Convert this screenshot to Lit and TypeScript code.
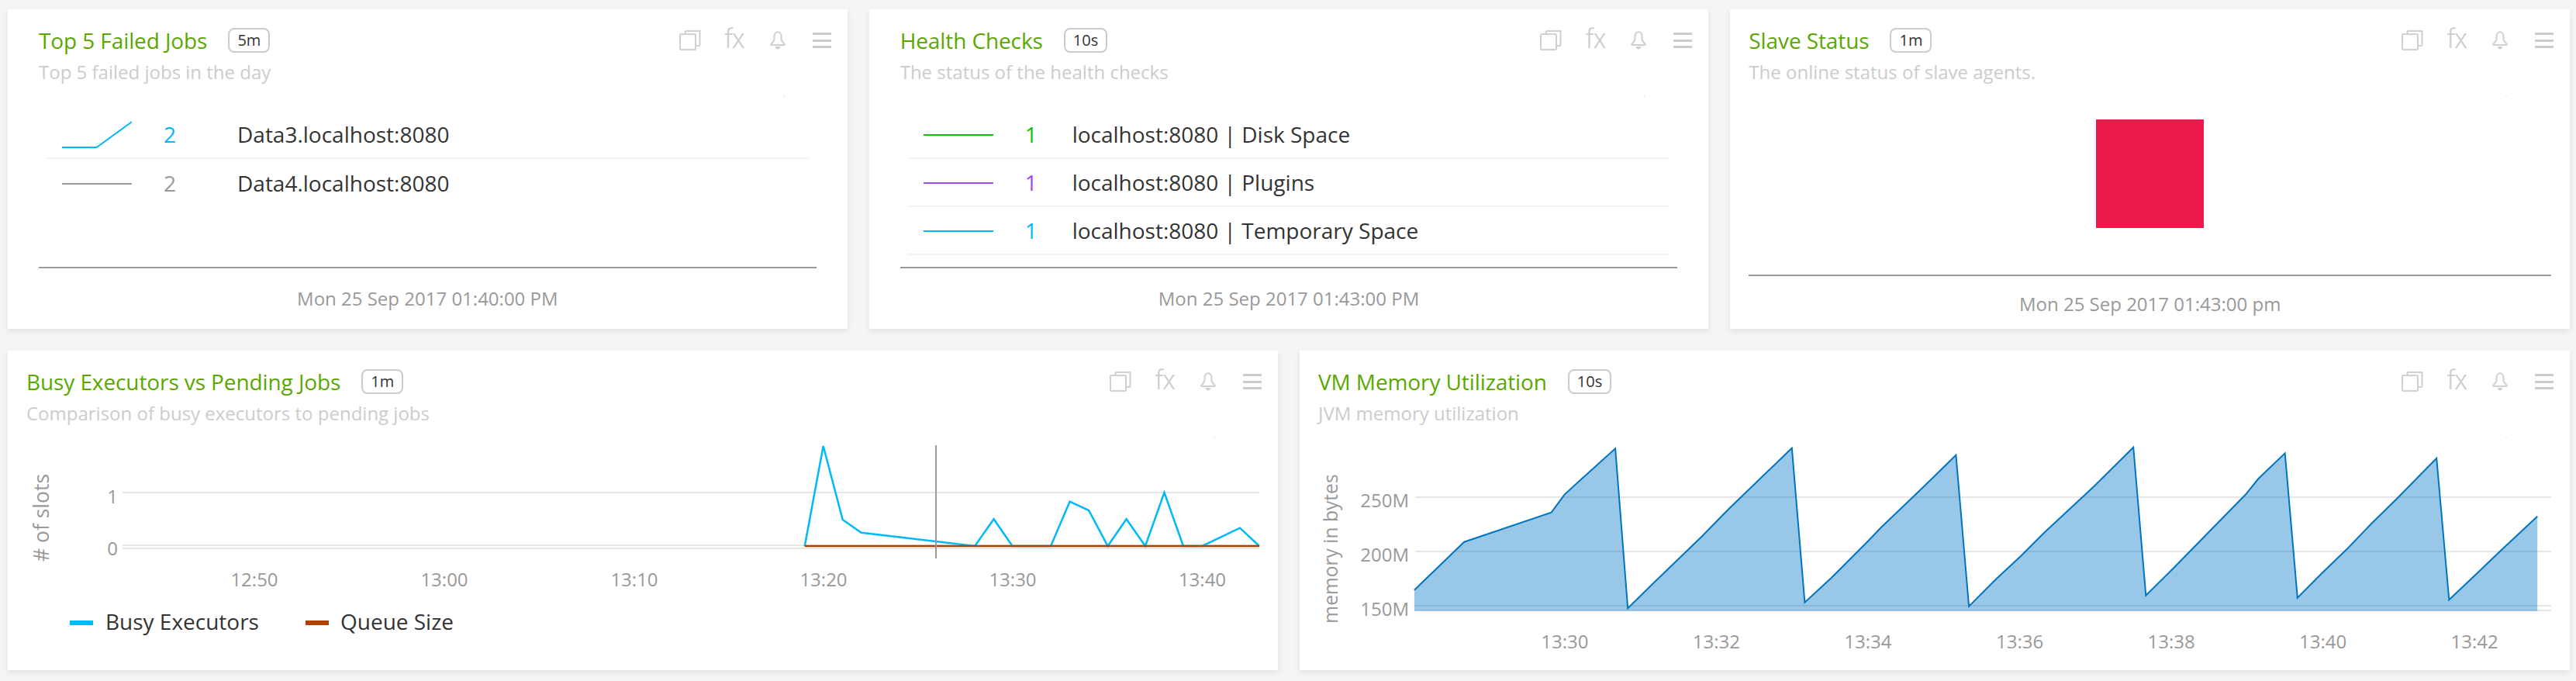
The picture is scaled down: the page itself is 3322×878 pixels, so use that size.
import { LitElement, html, css, svg } from "lit";
import { customElement, property } from "lit/decorators.js";

const BLUE = "#00b9fb";
const RED = "#ae4100";

const busy = [[270,792],[317,405],[366,690],[413,740],[700,792],[748,688],[795,792],[892,792],[940,620],[988,654],[1036,792],[1083,688],[1131,792],[1179,585],[1227,792],[1275,792],[1370,722],[1419,792]]
  .map(([x, y]) => [900 + x / 1.96, 440 + y / 3]);

const memA = [[306,962],[426,776],[636,662],[668,592],[790,415],[820,1033],[880,938],[1000,752],[1062,650],[1215,413],[1246,1010],[1310,915],[1400,770],[1430,720]]
  .map(([x, y]) => [1660 + x / 1.867, 440 + y / 3]);
const memB = [[0,565],[79,440],[110,1025],[175,920],[235,830],[290,742],[410,562],[505,410],[535,983],[600,880],[650,797],[775,592],[805,532],[869,433],[899,992],[960,893],[1020,800],[1075,708],[1140,605],[1233,452],[1263,1000],[1330,898],[1385,813],[1475,677]]
  .map(([x, y]) => [2480 + x / 1.862, 440 + y / 3]);
const mem = [...memA, ...memB];

const pts = (a: number[][]) => a.map((p) => `${p[0].toFixed(1)},${p[1].toFixed(1)}`).join(" ");

@customElement("dash-card")
class DashCard extends LitElement {
  @property() heading = "";
  @property() sub = "";
  @property() interval = "";
  @property() foot = "";
  @property({ type: Boolean, reflect: true }) wide = false;

  static styles = css`
    :host { display: flex; flex-direction: column; position: relative; background: #fff; height: 412px; box-shadow: 0 3px 8px rgba(0,0,0,.09); font-family: "Open Sans", sans-serif; }
    .head { padding: 24px 21px 0 24px; height: 76px; box-sizing: content-box; }
    :host([wide]) .head { padding-left: 40px; }
    .top { display: flex; align-items: center; height: 32px; }
    .title { font-size: 28px; line-height: 32px; color: #5aa700; white-space: nowrap; letter-spacing: -.1px; }
    .badge { margin-left: 27px; box-sizing: border-box; height: 32px; padding: 0 10px; border: 2px solid #ccc; border-radius: 8px; font-size: 20px; line-height: 28px; color: #333; }
    .tools { margin-left: auto; display: flex; align-items: center; height: 32px; }
    .tools svg { display: block; fill: none; stroke: #d0d0d0; stroke-width: 2; }
    .fx { margin-left: 30px; width: 23px; height: 28px; font-family: Roboto, sans-serif; font-weight: 300; font-size: 35px; line-height: 26px; color: #ccc; letter-spacing: -1.5px; }
    .bell { margin-left: 36px; }
    .menu { margin-left: 35px; display: flex; flex-direction: column; gap: 5.5px; width: 24px; }
    .menu i { display: block; height: 3px; background: #ccc; }
    .sub { margin-top: 9px; font-size: 24px; line-height: 32px; color: #ccc; white-space: nowrap; }
    .body { flex: 1; min-height: 0; }
    .foot { margin: 0 40px; border-top: 2px solid #999; padding: 25px 0; font-size: 24px; line-height: 28px; color: #999; text-align: center; }
    :host(:not([wide])) .foot { margin: 0 24px; padding: 22px 0 18px; }
    .speck { position: absolute; right: 81px; top: 112px; width: 2px; height: 1px; background: #ddd; }
  `;

  render() {
    return html`
      <div class="head">
        <div class="top">
          <span class="title">${this.heading}</span>
          <span class="badge">${this.interval}</span>
          <div class="tools">
            <svg width="28" height="26" viewBox="0 0 28 26"><rect x="1" y="5" width="20" height="20" rx="1.5"></rect><path d="M7.5 5V2.5Q7.5 1 9 1H26.5V18.5Q26.5 20 25 20H22"></path></svg>
            <span class="fx">fx</span>
            <svg class="bell" width="20" height="24" viewBox="0 0 20 24"><path d="M10 1.2C7 1.2 5.5 4 5.5 7V10C5.5 13 3.5 14.5 1.5 16.5Q.6 18 2 18H18Q19.400 18 18.500 16.500C16.500 14.500 14.500 13 14.500 10V7C14.500 4 13 1.200 10 1.200Z"></path><path d="M6.500 20H13.500C13 22.500 11.500 23.500 10 23.500S7 22.500 6.500 20Z" style="fill:#d0d0d0;stroke:none"></path></svg>
            <div class="menu"><i></i><i></i><i></i></div>
          </div>
        </div>
        <div class="sub">${this.sub}</div>
      </div>
      <div class="body"><slot></slot></div>
      ${this.foot ? html`<div class="foot">${this.foot}</div>` : ""}
      <span class="speck"></span>
    `;
  }
}

@customElement("app-root")
class AppRoot extends LitElement {
  static styles = css`
    :host { display: block; width: 3322px; height: 878px; overflow: hidden; background: #f5f5f5; font-family: "Open Sans", sans-serif; }
    .page { box-sizing: border-box; height: 878px; padding: 12px 8px 14px 10px; display: grid; grid-template-columns: repeat(6, 1fr); gap: 28px; align-content: start; }
    .third { grid-column: span 2; }
    .half { grid-column: span 3; }
    .list { margin: 31px 50px 0; }
    .row { display: flex; align-items: center; box-sizing: border-box; height: 62px; padding-left: 20px; border-bottom: 2px solid #f3f3f3; font-size: 28px; color: #333; white-space: nowrap; }
    .row.last { border-bottom: none; }
    .row svg { display: block; width: 90px; height: 60px; margin-right: 41px; fill: none; stroke-width: 2; }
    .num { flex: none; }
    .num.w { width: 95px; }
    .num.n { width: 61px; }
    .status { height: 100%; display: flex; justify-content: center; padding-top: 42px; box-sizing: border-box; }
    .block { width: 139px; height: 140px; background: #ec1a4b; }
    .chart { display: block; width: 100%; height: 312px; }
    .chart text { font-family: "Open Sans", sans-serif; font-size: 24px; fill: #999; }
    .chart text.legend { font-size: 28px; fill: #333; }
    .chart text.ax1 { font-size: 26.5px; }
    .chart text.ax2 { font-size: 24.6px; }
    .grid { stroke: #e6e6e6; stroke-width: 2; }
  `;

  private row(color: string, n: string, name: string, cls: string, line: string, last = false) {
    return html`<div class="row ${last ? "last" : ""}">
      <svg viewBox="0 0 90 60" style="stroke:${color}"><polyline points=${line}></polyline></svg>
      <span class="num ${cls}" style="color:${color}">${n}</span>
      <span>${name}</span>
    </div>`;
  }

  private busyChart() {
    return html`<svg class="chart" viewBox="10 552 1638 312">
      ${svg`
      <line class="grid" x1="158" x2="1624" y1="635" y2="635"></line>
      <line class="grid" x1="158" x2="1624" y1="703" y2="703"></line>
      <line class="grid" x1="158" x2="1624" y1="707" y2="707"></line>
      <text class="ax1" text-anchor="middle" transform="translate(63.500 667.500) rotate(-90)">&#35; of slots</text>
      <text x="145" y="649" text-anchor="middle">1</text>
      <text x="145" y="716" text-anchor="middle">0</text>
      ${[[328,"12:50"],[573,"13:00"],[818,"13:10"],[1062,"13:20"],[1306,"13:30"],[1550.5,"13:40"]].map(([x,t]) => svg`<text x=${x} y="756" text-anchor="middle">${t}</text>`)}
      <polyline points=${pts(busy)} fill="none" stroke=${BLUE} stroke-width="2.500"></polyline>
      <line x1="1037.700" x2="1624" y1="704" y2="704" stroke=${RED} stroke-width="2.500"></line>
      <line x1="1207" x2="1207" y1="574" y2="720" stroke="#999" stroke-width="2"></line>
      <rect x="90" y="800" width="30" height="6" fill=${BLUE}></rect>
      <text class="legend" x="136" y="812">Busy Executors</text>
      <rect x="394" y="800" width="30" height="6" fill=${RED}></rect>
      <text class="legend" x="439" y="812">Queue Size</text>
      `}
    </svg>`;
  }

  private memChart() {
    const base = 787.7;
    const first = mem[0];
    const last = mem[mem.length - 1];
    const area = [[first[0], base], ...mem, [last[0], base]];
    return html`<svg class="chart" viewBox="1676 552 1638 312">
      ${svg`
      ${[641, 711, 781, 787].map((y) => svg`<line class="grid" x1="1825" x2="3290" y1=${y} y2=${y}></line>`)}
      <text class="ax2" text-anchor="middle" transform="translate(1725 707.500) rotate(-90)">memory in bytes</text>
      ${[[654,"250M"],[724,"200M"],[794,"150M"]].map(([y,t]) => svg`<text x="1817" y=${y} text-anchor="end">${t}</text>`)}
      ${[["13:30",1660+668/1.867],["13:32",1660+1033/1.867],["13:34",1660+1398/1.867],["13:36",2480+232/1.862],["13:38",2480+596/1.862],["13:40",2480+960/1.862],["13:42",2480+1324/1.862]].map(([t,x]) => svg`<text x=${x} y="836" text-anchor="middle">${t}</text>`)}
      <polygon points=${pts(area)} fill="#0074c2" fill-opacity=".4"></polygon>
      <polyline points=${pts(mem)} fill="none" stroke="#0074c2" stroke-width="2"></polyline>
      `}
    </svg>`;
  }

  render() {
    return html`<div class="page">
      <dash-card class="third" wide heading="Top 5 Failed Jobs" interval="5m" sub="Top 5 failed jobs in the day" foot="Mon 25 Sep 2017 01:40:00 PM">
        <div class="list">
          ${this.row(BLUE, "2", "Data3.localhost:8080", "w", "0,47 44.600,47 90,14")}
          ${this.row("#999", "2", "Data4.localhost:8080", "w", "0,31 90,31", true)}
        </div>
      </dash-card>
      <dash-card class="third" wide heading="Health Checks" interval="10s" sub="The status of the health checks" foot="Mon 25 Sep 2017 01:43:00 PM">
        <div class="list">
          ${this.row("#0ac400", "1", "localhost:8080 | Disk Space", "n", "0,31 90,31")}
          ${this.row("#a646f5", "1", "localhost:8080 | Plugins", "n", "0,31 90,31")}
          ${this.row(BLUE, "1", "localhost:8080 | Temporary Space", "n", "0,31 90,31")}
        </div>
      </dash-card>
      <dash-card class="third" heading="Slave Status" interval="1m" sub="The online status of slave agents." foot="Mon 25 Sep 2017 01:43:00 pm">
        <div class="status"><div class="block"></div></div>
      </dash-card>
      <dash-card class="half" heading="Busy Executors vs Pending Jobs" interval="1m" sub="Comparison of busy executors to pending jobs">${this.busyChart()}</dash-card>
      <dash-card class="half" heading="VM Memory Utilization" interval="10s" sub="JVM memory utilization">${this.memChart()}</dash-card>
    </div>`;
  }
}
